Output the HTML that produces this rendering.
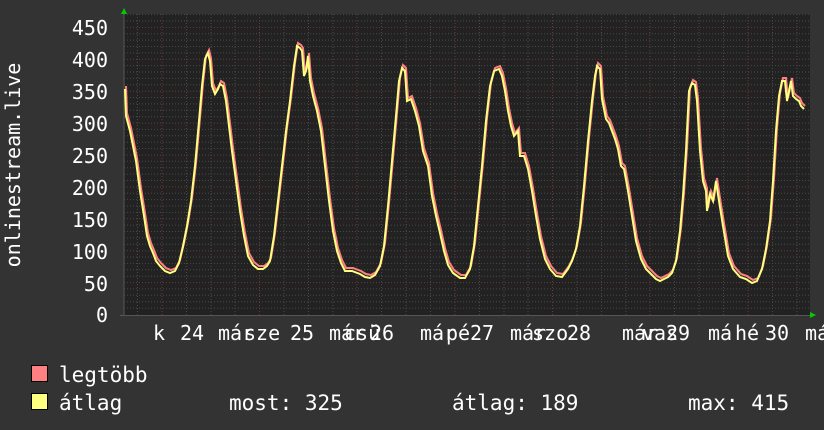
<!DOCTYPE html>
<html><head><meta charset="utf-8"><style>
html,body{margin:0;padding:0;background:#333;width:824px;height:430px;overflow:hidden}
svg{display:block}
text{font-family:"DejaVu Sans Mono","Liberation Mono",monospace;fill:#fff;font-size:20px}
.lg{font-size:21px}
</style></head><body>
<svg width="824" height="430" viewBox="0 0 824 430" xmlns="http://www.w3.org/2000/svg">
<defs>
<polyline id="ln" points="125,88 126,115 130,130 133,145 136,160 140,190 144,215 147,235 150,245 153,252 156,260 160,265 165,270 170,272 175,270 179,262 183,245 187,225 191,200 195,165 199,120 202,85 205,58 208,52 210,60 212,85 215,93 218,88 220,83 223,85 226,100 229,125 232,150 236,180 240,210 244,235 248,255 253,264 258,268 263,268 267,265 270,260 274,235 278,200 282,165 286,130 290,100 294,65 297,45 300,47 302,50 304,75 306,70 308,55 310,80 313,95 317,110 321,130 325,165 329,200 333,230 337,250 341,262 345,270 352,270 360,273 365,276 370,277 375,274 380,265 384,245 388,205 392,160 396,115 399,80 402,67 405,70 407,100 411,98 415,110 419,125 423,150 428,165 432,195 436,215 440,232 444,250 448,264 453,272 460,277 465,277 470,268 474,245 478,205 482,165 486,120 490,85 494,70 499,68 502,75 505,90 508,110 511,125 514,135 518,130 520,155 524,155 528,168 532,190 536,215 540,238 545,258 550,268 556,275 562,276 568,268 572,260 576,248 580,225 584,185 588,140 592,100 595,75 597,65 600,68 602,98 606,118 609,122 612,130 615,138 618,148 621,165 624,168 628,190 632,215 636,240 641,258 646,268 652,274 656,278 660,280 664,278 668,276 672,272 676,260 680,230 683,195 686,150 689,90 692,82 695,84 697,100 700,150 703,180 706,190 707,210 710,193 713,200 716,180 719,200 723,225 728,255 733,268 740,276 746,278 752,282 757,280 762,268 766,248 770,220 773,180 776,130 779,95 782,80 785,80 787,100 789,90 791,80 793,95 796,98 799,100 801,105 804,108"/>
</defs>
<rect x="124" y="14" width="686" height="302" fill="#222"/>
<g stroke="#4a4a4a" stroke-width="1" stroke-dasharray="1,2">
<path d="M124 308.1H810M124 301.7H810M124 295.3H810M124 288.9H810M124 276.2H810M124 269.8H810M124 263.4H810M124 257H810M124 244.3H810M124 237.9H810M124 231.5H810M124 225.1H810M124 212.4H810M124 206H810M124 199.6H810M124 193.2H810M124 180.5H810M124 174.1H810M124 167.7H810M124 161.3H810M124 148.6H810M124 142.2H810M124 135.8H810M124 129.4H810M124 116.7H810M124 110.3H810M124 103.9H810M124 97.5H810M124 84.8H810M124 78.4H810M124 72H810M124 65.6H810M124 52.9H810M124 46.5H810M124 40.1H810M124 33.7H810M124 21H810M124 14.6H810"/>
<path d="M137.5 14V316M186.5 14V316M211 14V316M235 14V316M284 14V316M308.5 14V316M333 14V316M381.5 14V316M406 14V316M430.5 14V316M479.5 14V316M504 14V316M528 14V316M577 14V316M601.5 14V316M626 14V316M674.5 14V316M699 14V316M723.5 14V316M772.5 14V316M797 14V316"/>
</g>
<g stroke="#6b3a3a" stroke-width="1" stroke-dasharray="1,2">
<path d="M124 282.6H810M124 250.7H810M124 218.8H810M124 186.9H810M124 155H810M124 123.1H810M124 91.2H810M124 59.3H810M124 27.4H810"/>
<path d="M162 14V316M259.5 14V316M357 14V316M455 14V316M552.5 14V316M650 14V316M748 14V316"/>
</g>
<line x1="124" y1="10" x2="124" y2="316" stroke="#555" stroke-width="1"/>
<line x1="120" y1="315.5" x2="812" y2="315.5" stroke="#555" stroke-width="1"/>
<polygon points="121,14 124,8 127,14" fill="#0c0"/>
<polygon points="810,312 816,315 810,318" fill="#0c0"/>
<use href="#ln" fill="none" stroke="#ff8080" stroke-width="2" transform="translate(1,-2)"/>
<use href="#ln" fill="none" stroke="#ffff80" stroke-width="2" transform="translate(0,1)"/>
<g text-anchor="end">
<text x="108" y="35">450</text><text x="108" y="67">400</text><text x="108" y="99">350</text>
<text x="108" y="131">300</text><text x="108" y="163">250</text><text x="108" y="195">200</text>
<text x="108" y="227">150</text><text x="108" y="259">100</text><text x="108" y="291">50</text>
<text x="108" y="322">0</text>
</g>
<text transform="translate(20,165) rotate(-90)" text-anchor="middle">onlinestream.live</text>
<g>
<text x="153" y="340">k</text><text x="180" y="340">24</text>
<text x="218" y="340">már</text><text x="244" y="340">sze</text>
<text x="290" y="340">25</text>
<text x="329" y="340">már</text><text x="344" y="340">csü</text><text x="370" y="340">26</text>
<text x="420" y="340">már</text><text x="446" y="340">pé</text><text x="470" y="340">27</text>
<text x="510" y="340">már</text><text x="532" y="340">szo</text><text x="567" y="340">28</text>
<text x="622" y="340">már</text><text x="642" y="340">vas</text><text x="666" y="340">29</text>
<text x="708" y="340">má</text><text x="735" y="340">hé</text><text x="765" y="340">30</text>
<text x="805" y="340">má</text>
</g>
<rect x="31.5" y="365.5" width="16" height="16" fill="#ff8080" stroke="#000"/>
<rect x="31.5" y="393.5" width="16" height="16" fill="#ffff80" stroke="#000"/>
<text class="lg" x="59" y="382">legtöbb</text>
<text class="lg" x="59" y="410">átlag</text>
<text class="lg" x="229" y="410">most: 325</text>
<text class="lg" x="452" y="410">átlag: 189</text>
<text class="lg" x="688" y="410">max: 415</text>
</svg>
</body></html>
